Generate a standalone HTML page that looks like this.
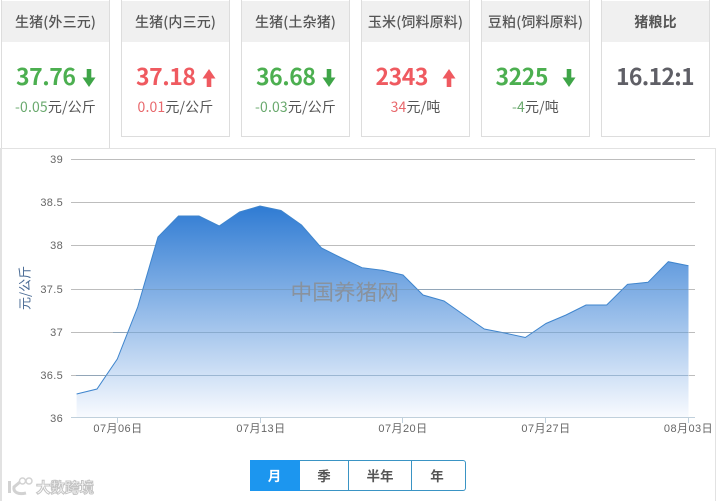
<!DOCTYPE html>
<html lang="zh"><head><meta charset="utf-8">
<style>
html,body{margin:0;padding:0;background:#fff;}
body{width:716px;height:501px;position:relative;overflow:hidden;font-family:"Liberation Sans","Noto Sans CJK SC",sans-serif;color:#555;}
.c{position:absolute;top:-1px;width:109px;height:138px;box-sizing:border-box;border:1px solid #ddd;background:#fff;text-align:center;}
.h{position:absolute;left:0;right:0;top:1px;height:41px;background:#f0f0f0;font:500 14px/43px "Noto Sans CJK SC",sans-serif;letter-spacing:.15px;color:#555;white-space:nowrap;}
.n{position:absolute;left:13.5px;top:57px;font:700 23px/36px "Noto Sans CJK SC",sans-serif;letter-spacing:-.45px;white-space:nowrap;}
.a{position:absolute;left:80px;top:68px;}
.s{position:absolute;left:0;right:0;top:95px;font:400 14px/24px "Noto Sans CJK SC",sans-serif;letter-spacing:.15px;white-space:nowrap;color:#555;}
.g{color:#4caf50}.r{color:#ef5a60}
.sg{color:#6aa96e}.sr{color:#e8686c}
.b{position:absolute;top:460px;height:31px;box-sizing:border-box;border:1px solid #3a94c4;border-left:none;font:700 13.5px/29px "Noto Sans CJK SC",sans-serif;color:#555;text-align:center;background:#fff;}
</style></head><body>

<div style="position:absolute;left:0;top:148px;width:716px;height:353px;box-sizing:border-box;border:1px solid #e2e2e2;border-left-width:2px;border-bottom:none;"></div>

<svg style="position:absolute;left:0;top:0" width="716" height="501" xmlns="http://www.w3.org/2000/svg">
<defs><linearGradient id="f" x1="0" y1="206" x2="0" y2="420" gradientUnits="userSpaceOnUse"><stop offset="0" stop-color="#2f7bd3"/><stop offset="1" stop-color="#fbfcff"/></linearGradient></defs>
<g stroke="#bdbdbd" stroke-width="1">
<path d="M71 159.500H695M71 202.500H695M71 245.500H695M71 289.500H695M71 332.500H695M71 375.500H695"/>
</g>
<path d="M76.600 394L97 389L117.300 359L137.700 307L158 237L178.500 216L199 216L219.200 226L239.600 212L260 206L281 210.500L301.500 225L321.500 248L341.500 258L362 267.700L382.500 270.300L403 275L423 295L444 301L464 315L484.300 329L504.700 333L525.300 337.500L546 323.500L566 315L586 305L606.700 305L627.500 284.300L648 282.300L668.300 261.700L688.500 265.700V417H76.600Z" fill="url(#f)"/>
<path d="M76.600 394L97 389L117.300 359L137.700 307L158 237L178.500 216L199 216L219.200 226L239.600 212L260 206L281 210.500L301.500 225L321.500 248L341.500 258L362 267.700L382.500 270.300L403 275L423 295L444 301L464 315L484.300 329L504.700 333L525.300 337.500L546 323.500L566 315L586 305L606.700 305L627.500 284.300L648 282.300L668.300 261.700L688.500 265.700" fill="none" stroke="#3f85cd" stroke-width="1"/>
<g stroke="#6f93b5" stroke-opacity=".55" stroke-width="1">
<path d="M134 289.500H688M113 332.500H688M76 375.500H688"/>
</g>
<path d="M71 417.500H695" stroke="#c0d0dc" stroke-width="1"/>
<path d="M117.500 418V423M260.500 418V423M402.500 418V423M545.500 418V423M688.500 418V423" stroke="#c0d0dc" stroke-width="1"/>
<g font-family="Liberation Sans, Noto Sans CJK SC, sans-serif" font-size="11" fill="#666" text-anchor="end" letter-spacing=".3">
<text x="63" y="163">39</text><text x="63" y="206">38.5</text><text x="63" y="249">38</text><text x="63" y="293">37.5</text><text x="63" y="336">37</text><text x="63" y="379">36.5</text><text x="63" y="422">36</text>
</g>
<g font-family="Liberation Sans, Noto Sans CJK SC, sans-serif" font-size="11" fill="#666" text-anchor="middle" letter-spacing=".45">
<text x="118" y="432">07月06日</text><text x="261" y="432">07月13日</text><text x="403" y="432">07月20日</text><text x="546" y="432">07月27日</text><text x="688.500" y="432">08月03日</text>
</g>
<text transform="translate(29.500,310) rotate(-90)" font-family="Noto Sans CJK SC, sans-serif" font-size="13" fill="#4a6b95">元/公斤</text>
<text x="290.500" y="300" font-family="Noto Sans CJK SC, sans-serif" font-size="21.700" fill="#8a8f96" fill-opacity=".9">中国养猪网</text>
<g fill="none" stroke="#d2d2d2">
<path d="M9.500 481V493" stroke-width="3"/><path d="M20 482L14 487C13 492 18 495 26 493" stroke-width="3"/><circle cx="22.500" cy="481" r="3" stroke-width="1.500"/><circle cx="29" cy="481" r="3" stroke-width="1.500"/>
</g>
<text x="36" y="493" font-family="Noto Sans CJK SC, sans-serif" font-size="14.500" font-weight="700" fill="#fff" stroke="#c4c4c4" stroke-width="1">大数跨境</text>
</svg>

<div class="c" style="left:1px;height:149px;border-bottom:none;"><div class="h">生猪(外三元)</div><div class="n g" style="left:14px">37.76</div>
<svg class="a" width="14" height="20"><path d="M4.700 1H9.300V9.500H13.500L7 19L.5 9.500H4.700Z" fill="#3fa548"/></svg>
<div class="s"><span class="sg">-0.05</span>元/公斤</div></div>

<div class="c" style="left:121px;"><div class="h">生猪(内三元)</div><div class="n r" style="left:14px">37.18</div>
<svg class="a" width="14" height="20"><path d="M4.700 19H9.300V10.500H13.500L7 1L.5 10.500H4.700Z" fill="#ef5a60"/></svg>
<div class="s"><span class="sr">0.01</span>元/公斤</div></div>

<div class="c" style="left:241px;"><div class="h">生猪(土杂猪)</div><div class="n g" style="left:14px">36.68</div>
<svg class="a" width="14" height="20"><path d="M4.700 1H9.300V9.500H13.500L7 19L.5 9.500H4.700Z" fill="#3fa548"/></svg>
<div class="s"><span class="sg">-0.03</span>元/公斤</div></div>

<div class="c" style="left:361px;"><div class="h">玉米(饲料原料)</div><div class="n r">2343</div>
<svg class="a" width="14" height="20"><path d="M4.700 19H9.300V10.500H13.500L7 1L.5 10.500H4.700Z" fill="#ef5a60"/></svg>
<div class="s"><span class="sr">34</span>元/吨</div></div>

<div class="c" style="left:481px;"><div class="h">豆粕(饲料原料)</div><div class="n g">3225</div>
<svg class="a" width="14" height="20"><path d="M4.700 1H9.300V9.500H13.500L7 19L.5 9.500H4.700Z" fill="#3fa548"/></svg>
<div class="s"><span class="sg">-4</span>元/吨</div></div>

<div class="c" style="left:601px;"><div class="h" style="font-weight:700">猪粮比</div><div class="n" style="left:14px;color:#5f5f66;letter-spacing:-.7px">16.12:1</div></div>

<div class="b" style="left:250px;width:50px;background:#1c96ef;border-color:#1c96ef;color:#fff;">月</div>
<div class="b" style="left:300px;width:49px;">季</div>
<div class="b" style="left:349px;width:63px;">半年</div>
<div class="b" style="left:412px;width:54px;border-radius:0 3px 3px 0;padding-right:3px;">年</div>
</body></html>
